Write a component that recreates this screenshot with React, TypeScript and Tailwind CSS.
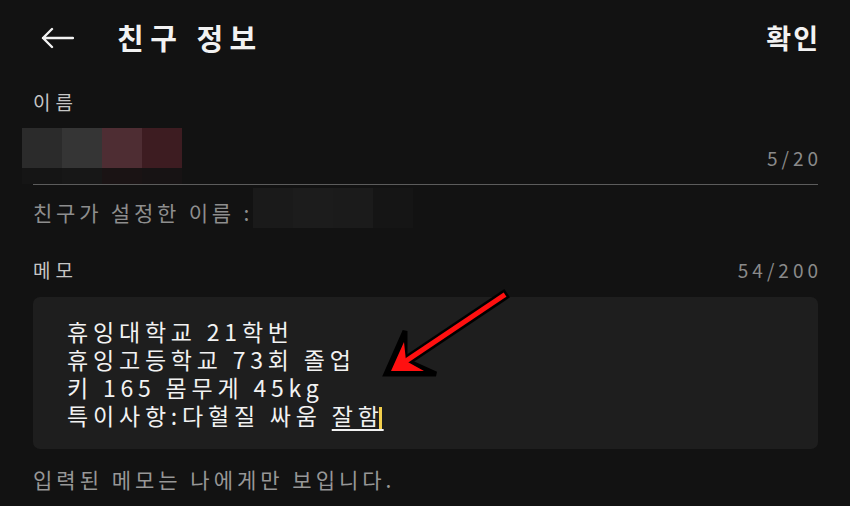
import React from "react";

const nameBlocks = ["bg-[#2b2b2b]", "bg-[#353535]", "bg-[#4e2d33]", "bg-[#3d1c21]"];
const nameShadow = ["bg-[#151515]", "bg-[#171717]", "bg-[#1a1314]", "bg-[#171314]"];
const nickBlocks = ["bg-[#1a1a1a]", "bg-[#1c1c1c]", "bg-[#1b1b1b]", "bg-[#151515]"];

const memoLines = ["휴잉대학교 21학번", "휴잉고등학교 73회 졸업", "키 165 몸무게 45kg"];

const BackArrow = () => (
  <svg width="34" height="22" viewBox="0 0 34 22" fill="none">
    <path
      d="M33 11H3M12 2L3 11L12 20"
      stroke="#f2f2f2"
      strokeWidth="2.4"
      strokeLinecap="round"
      strokeLinejoin="round"
    />
  </svg>
);

// red pointer drawn over the memo box
const RedArrow = () => (
  <svg
    className="absolute left-[380px] top-[285px]"
    width="135"
    height="95"
    viewBox="0 0 135 95"
  >
    <line x1="123" y1="11" x2="20" y2="80" stroke="#000" strokeWidth="10" strokeLinecap="square" />
    <polygon points="6,89 25,46 25,75 56,89" fill="#000" stroke="#000" strokeWidth="5" strokeLinejoin="miter" />
    <line x1="123" y1="11" x2="20" y2="80" stroke="#ff1010" strokeWidth="5" strokeLinecap="square" />
    <polygon points="11,86 24,57 26,76 44,86" fill="#ff1010" />
  </svg>
);

const App: React.FC = () => {
  return (
    <div className="relative w-[850px] h-[506px] overflow-hidden bg-[#121212] font-['Noto_Sans_CJK_KR','Noto_Sans',sans-serif]">
      {/* ===== HEADER ===== */}
      <div className="flex h-[75px] items-center justify-between pl-[40px] pr-[30px]">
        <div className="flex items-center">
          <BackArrow />
          <h1 className="ml-[43px] text-[29px] font-bold leading-none tracking-[6.5px] text-[#f2f2f2]">
            친구 정보
          </h1>
        </div>
        <button className="text-[27px] font-bold leading-none tracking-[2px] text-[#f2f2f2]">
          확인
        </button>
      </div>

      <div className="pl-[33px] pr-[32px]">
        {/* ===== NAME ===== */}
        <div className="mt-[15px] text-[19px] leading-[24px] tracking-[5px] text-[#c6c6c6]">
          이름
        </div>
        <div className="mt-[14px] flex h-[57px] justify-between border-b border-[#5c5c5c]">
          <div className="-ml-[11px] flex flex-col">
            <div className="flex">
              {nameBlocks.map((c, i) => (
                <div key={i} className={`h-[40px] w-[40px] ${c}`} />
              ))}
            </div>
            <div className="flex">
              {nameShadow.map((c, i) => (
                <div key={i} className={`h-[16px] w-[40px] ${c}`} />
              ))}
            </div>
          </div>
          <div className="-mr-[4px] mt-[18px] text-[19px] leading-[24px] tracking-[4px] text-[#8a8a8a]">
            5/20
          </div>
        </div>

        <div className="flex h-[43px] items-start">
          <div className="mt-[15px] text-[21px] leading-[24px] tracking-[3.8px] text-[#8e8e8e]">
            친구가 설정한 이름 :
          </div>
          <div className="mt-[3px] flex">
            {nickBlocks.map((c, i) => (
              <div key={i} className={`h-[40px] w-[40px] ${c}`} />
            ))}
          </div>
        </div>

        {/* ===== MEMO ===== */}
        <div className="mt-[30px] flex items-center justify-between leading-[24px]">
          <span className="text-[19px] tracking-[5px] text-[#c6c6c6]">메모</span>
          <span className="-mr-[4px] text-[19px] tracking-[4px] text-[#8a8a8a]">54/200</span>
        </div>

        <div className="mt-[15px] h-[152px] rounded-[7px] bg-[#1e1e1e] pl-[34px] pt-[20px] text-[23px] leading-[28px] tracking-[4.8px] text-[#f2f2f2]">
          {memoLines.map((line) => (
            <div key={line}>{line}</div>
          ))}
          <div>
            특이사항:다혈질 싸움{" "}
            <span className="underline decoration-[1.5px] underline-offset-[4px]">잘함</span>
            <span className="-ml-[5px] inline-block h-[22px] w-[3px] align-[-4px] bg-[#f3cf4c]" />
          </div>
        </div>

        <div className="mt-[18px] text-[21px] leading-[24px] tracking-[4px] text-[#979797]">
          입력된 메모는 나에게만 보입니다.
        </div>
      </div>

      <RedArrow />
    </div>
  );
};

export default App;
